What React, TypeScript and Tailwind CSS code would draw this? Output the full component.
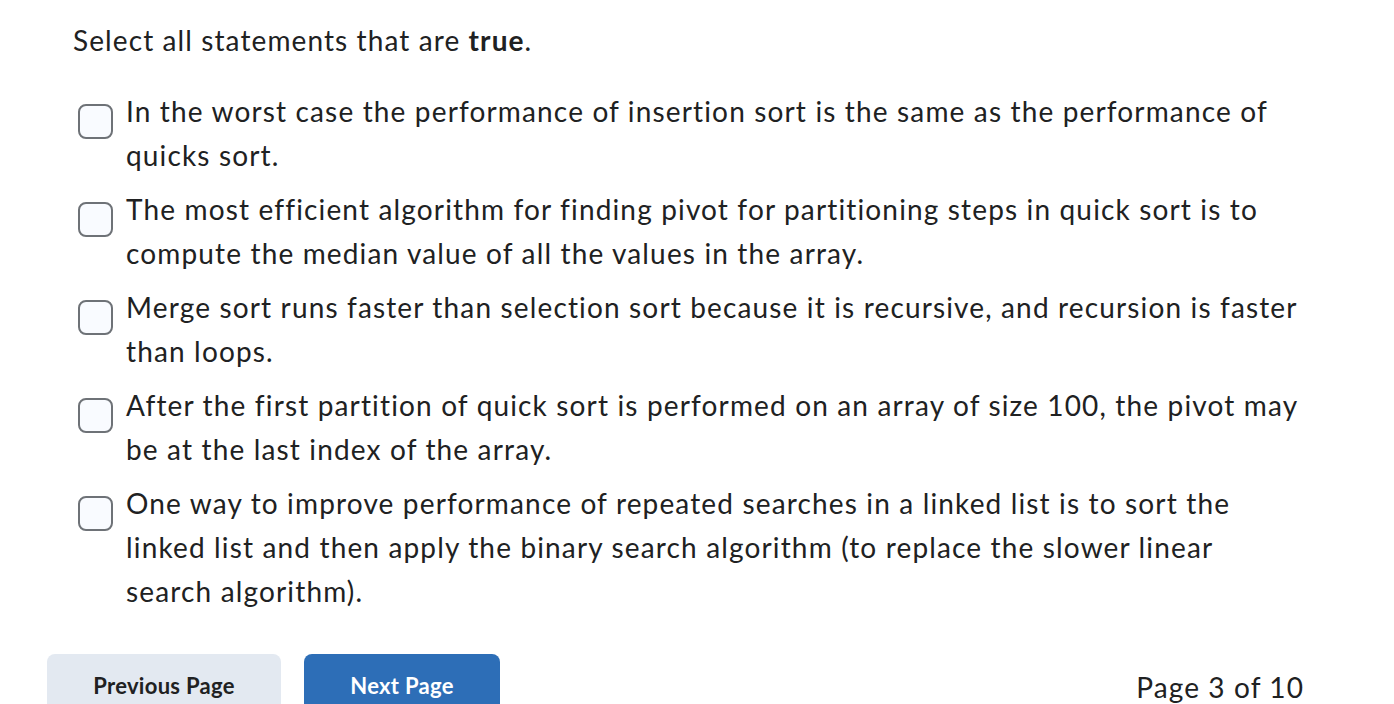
import { useState } from 'react';

const statements = [
  'In the worst case the performance of insertion sort is the same as the performance of quicks sort.',
  'The most efficient algorithm for finding pivot for partitioning steps in quick sort is to compute the median value of all the values in the array.',
  'Merge sort runs faster than selection sort because it is recursive, and recursion is faster than loops.',
  'After the first partition of quick sort is performed on an array of size 100, the pivot may be at the last index of the array.',
  'One way to improve performance of repeated searches in a linked list is to sort the linked list and then apply the binary search algorithm (to replace the slower linear search algorithm).',
];

function Option({ text }: { text: string }) {
  const [checked, setChecked] = useState(false);
  return (
    <label className="flex items-start cursor-pointer">
      <input
        type="checkbox"
        checked={checked}
        onChange={() => setChecked(!checked)}
        className="appearance-none shrink-0 w-[35px] h-[35px] mt-[15px] mr-[13px] rounded-[8px] border-2 border-[#6e7277] bg-[#f9fbff]"
      />
      <span className="leading-[44px] max-w-[1180px]">{text}</span>
    </label>
  );
}

export default function App() {
  return (
    <div
      className="w-[1394px] h-[704px] overflow-hidden bg-white text-[#202122] text-[28px] tracking-[1.15px]"
      style={{ fontFamily: 'Lato, "Noto Sans", sans-serif' }}
    >
      <div className="pl-[73px] pt-[18px]">
        <p className="leading-[44px] tracking-[1.1px]">
          Select all statements that are <strong className="font-bold">true</strong>.
        </p>
        <div className="mt-[27px] pl-[5px] flex flex-col gap-[10px]">
          {statements.map((s) => (
            <Option key={s} text={s} />
          ))}
        </div>
      </div>
      <div className="mt-[41px] pl-[47px] pr-[90px] flex items-start">
        <button className="w-[234px] h-[62px] rounded-[8px] bg-[#e3e9f1] text-[#202122] text-[22px] font-bold tracking-[0.3px]">
          Previous Page
        </button>
        <button className="ml-[23px] w-[196px] h-[62px] rounded-[8px] bg-[#2d6eb7] text-white text-[22px] font-bold tracking-[0.3px]">
          Next Page
        </button>
        <span className="ml-auto mt-[13px] leading-[40px] tracking-[1.1px]">Page 3 of 10</span>
      </div>
    </div>
  );
}
